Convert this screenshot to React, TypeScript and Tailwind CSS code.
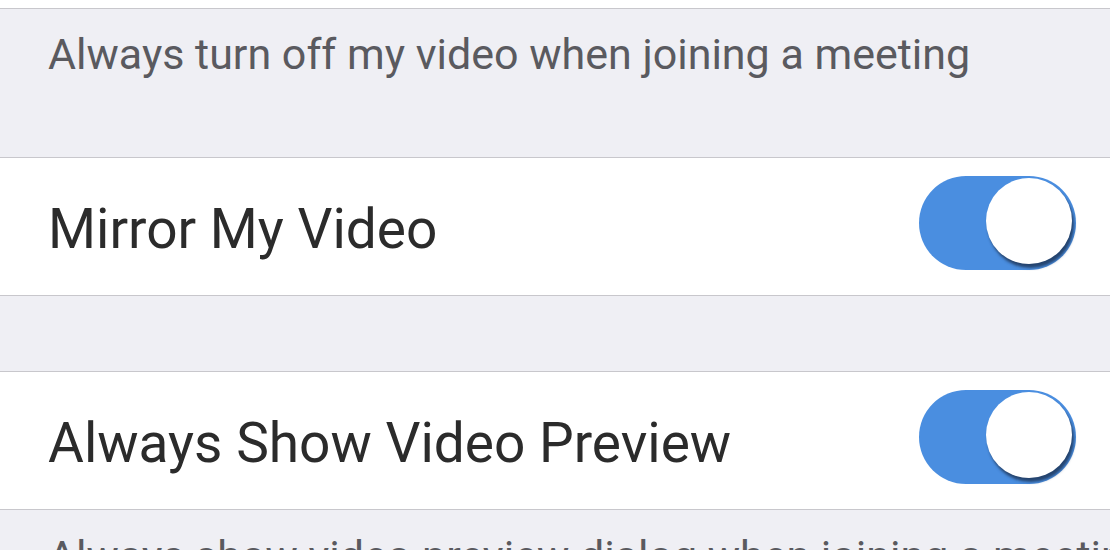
function Toggle() {
  return (
    <div className="relative w-[157px] h-[94px] mb-[8px] rounded-full bg-[#4a8ee0] shrink-0">
      <div className="absolute right-[4px] top-[2px] w-[86px] h-[86px] rounded-full bg-white shadow-[2px_4px_3px_rgba(30,55,90,0.85)]" />
    </div>
  );
}

function Row({ label }: { label: string }) {
  return (
    <div className="h-[139px] shrink-0 bg-white flex items-center justify-between pl-[48px] pr-[34px] border-y border-[#c8c7cc]">
      <span className="text-[55px] text-[#2b2b2b] leading-none whitespace-nowrap pt-[6px]">{label}</span>
      <Toggle />
    </div>
  );
}

export default function App() {
  return (
    <div
      className="w-[1110px] h-[550px] overflow-hidden bg-[#efeff4] flex flex-col"
      style={{ fontFamily: "Roboto, 'Noto Sans', sans-serif" }}
    >
      <div className="h-[9px] bg-white border-b border-[#c8c7cc] shrink-0" />
      <div className="h-[148px] shrink-0 pl-[48px] pt-[24px]">
        <p className="text-[43px] text-[#5a5a5f] leading-none whitespace-nowrap">
          Always turn off my video when joining a meeting
        </p>
      </div>
      <Row label="Mirror My Video" />
      <div className="h-[75px] shrink-0" />
      <Row label="Always Show Video Preview" />
      <div className="pl-[48px] pt-[25px] shrink-0">
        <p className="text-[43px] text-[#5a5a5f] leading-none whitespace-nowrap">
          Always show video preview dialog when joining a meeting
        </p>
      </div>
    </div>
  );
}
